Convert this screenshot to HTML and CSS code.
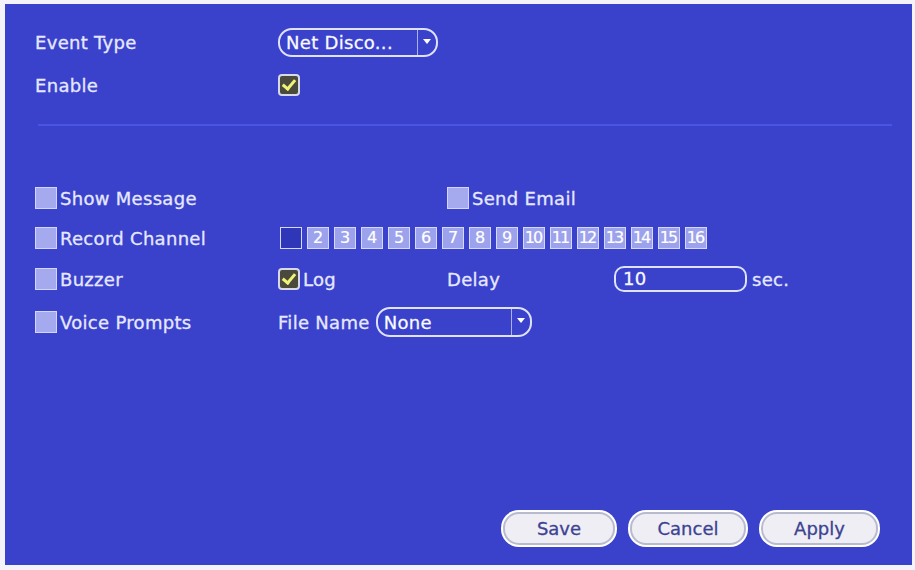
FILE: index.html
```html
<!DOCTYPE html>
<html>
<head>
    <title>Alarm - Network Event</title>
    <link rel="stylesheet" href="styles.css">
</head>
<body>
    <div class="panel">
        <!-- Event selection -->
        <div class="head">
            <span class="label">Event Type</span>
            <div class="select event-select">
                <span class="value">Net Disco...</span>
                <span class="arrow"></span>
            </div>
            <span class="label">Enable</span>
            <span class="check on"></span>
        </div>

        <div class="divider"></div>

        <!-- Actions for the event -->
        <div class="options">
            <label class="opt"><span class="check"></span>Show Message</label>
            <span></span>
            <label class="opt"><span class="check"></span>Send Email</label>
            <span></span>

            <label class="opt"><span class="check"></span>Record Channel</label>
            <div class="channels">
                <span class="ch off"></span>
                <span class="ch">2</span>
                <span class="ch">3</span>
                <span class="ch">4</span>
                <span class="ch">5</span>
                <span class="ch">6</span>
                <span class="ch">7</span>
                <span class="ch">8</span>
                <span class="ch">9</span>
                <span class="ch">10</span>
                <span class="ch">11</span>
                <span class="ch">12</span>
                <span class="ch">13</span>
                <span class="ch">14</span>
                <span class="ch">15</span>
                <span class="ch">16</span>
            </div>

            <label class="opt"><span class="check"></span>Buzzer</label>
            <label class="opt"><span class="check on"></span>Log</label>
            <span class="label">Delay</span>
            <div class="delay">
                <span class="field">10</span>
                <span class="unit">sec.</span>
            </div>

            <label class="opt"><span class="check"></span>Voice Prompts</label>
            <div class="file">
                <span class="label">File Name</span>
                <div class="select file-select">
                    <span class="value">None</span>
                    <span class="arrow"></span>
                </div>
            </div>
        </div>

        <div class="buttons">
            <button class="btn save">Save</button>
            <button class="btn cancel">Cancel</button>
            <button class="btn apply">Apply</button>
        </div>
    </div>
</body>
</html>
```

FILE: styles.css
```css
body {
    margin: 0;
    background: #f3f3f9;
    font-family: "DejaVu Sans", sans-serif;
}
.panel {
    box-sizing: border-box;
    width: 907px;
    height: 561px;
    margin: 4px 0 0 5px;
    padding: 24px 34px 20px 30px;
    background: #3a42cc;
    color: #e6e8ff;
    display: flex;
    flex-direction: column;
    font-size: 18px;
    letter-spacing: 0.3px;
    -webkit-text-stroke: 0.3px #e6e8ff;
}
.head {
    display: grid;
    grid-template-columns: 243px auto;
    grid-template-rows: 29px 22px;
    row-gap: 17px;
    align-items: center;
    justify-items: start;
}
.select {
    box-sizing: border-box;
    height: 29px;
    border: 2px solid #dfe2ff;
    border-radius: 14px;
    display: flex;
    align-items: center;
    padding-left: 6px;
}
.select .value {
    flex: 1;
    color: #fff;
}
.select .arrow {
    width: 18px;
    height: 100%;
    border-left: 1px solid #aab0f0;
    position: relative;
}
.select .arrow::after {
    content: "";
    position: absolute;
    left: 5px;
    top: 9px;
    border-left: 4px solid transparent;
    border-right: 4px solid transparent;
    border-top: 5px solid #fff;
}
.event-select {
    width: 160px;
}
.file-select {
    width: 156px;
    height: 30px;
    margin-left: 6px;
}
.check {
    box-sizing: border-box;
    width: 22px;
    height: 22px;
    background: #a5aaee;
    border: 1px solid #d2d5ff;
    display: inline-block;
    flex: none;
    position: relative;
    -webkit-text-stroke: 0;
}
.check.on {
    background: #4a4a3c;
    border: 2px solid #d8d8ea;
    border-radius: 4px;
}
.check.on::after {
    content: "";
    position: absolute;
    left: 5px;
    top: 1px;
    width: 5px;
    height: 10px;
    border-right: 3px solid #f2f27a;
    border-bottom: 3px solid #f2f27a;
    transform: rotate(40deg);
}
.divider {
    height: 2px;
    background: #4b55e4;
    margin: 28px -14px 0 3px;
}
.options {
    display: grid;
    grid-template-columns: 243px 169px 167px auto;
    grid-template-rows: 40px 40px 42px 44px;
    align-items: center;
    margin-top: 52px;
}
.opt {
    display: flex;
    align-items: center;
    gap: 3px;
}
.channels {
    grid-column: 2 / 5;
    display: flex;
    gap: 5px;
    padding-left: 2px;
}
.ch {
    box-sizing: border-box;
    width: 22px;
    height: 22px;
    background: #9ca2ec;
    border: 1px solid #d6d9ff;
    color: #fff;
    font-size: 16px;
    letter-spacing: -2px;
    text-indent: -2px;
    -webkit-text-stroke: 0.2px #fff;
    text-align: center;
    line-height: 20px;
}
.ch.off {
    background: #2f37b8;
}
.delay {
    display: flex;
    align-items: center;
    gap: 5px;
}
.field {
    box-sizing: border-box;
    width: 133px;
    height: 26px;
    border: 2px solid #dfe2ff;
    border-radius: 10px;
    padding-left: 7px;
    line-height: 22px;
    color: #fff;
}
.file {
    grid-column: 2 / 5;
    display: flex;
    align-items: center;
}
.buttons {
    margin-top: auto;
    display: flex;
    justify-content: flex-end;
    gap: 15px;
}
.btn {
    box-sizing: border-box;
    height: 33px;
    border-radius: 16px;
    border: 2px solid #b8bace;
    box-shadow: 0 0 0 2px #fff;
    background: #eeeef4;
    color: #3c4292;
    font-family: "DejaVu Sans", sans-serif;
    font-size: 18px;
    -webkit-text-stroke: 0.3px #3c4292;
}
.save {
    width: 112px;
}
.cancel {
    width: 116px;
}
.apply {
    width: 117px;
}
```
